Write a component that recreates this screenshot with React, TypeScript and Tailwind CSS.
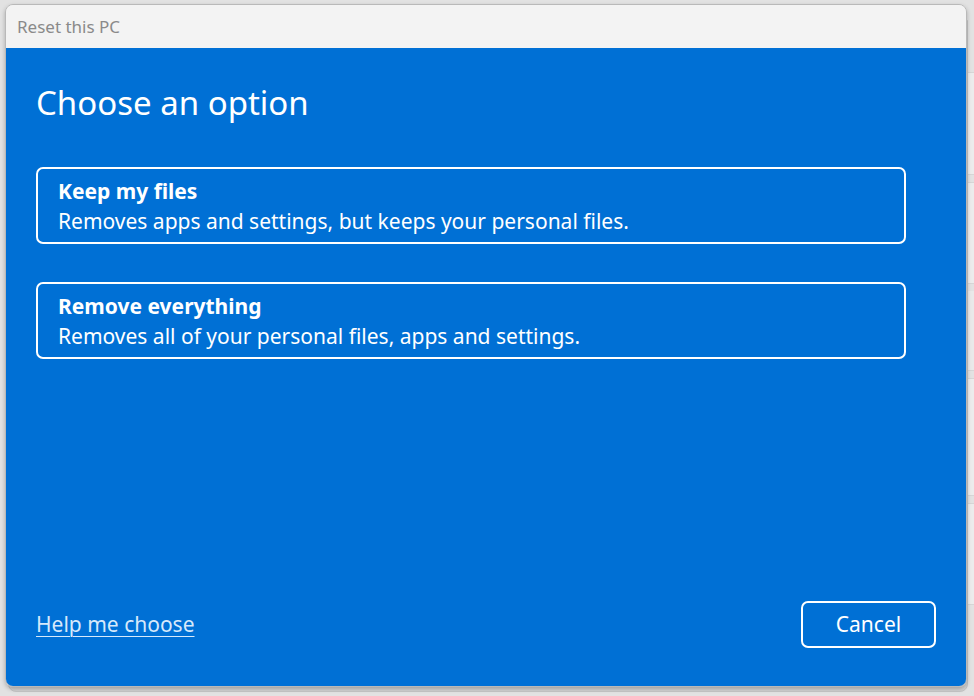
import React from 'react';

const font = { fontFamily: '"Noto Sans", "Open Sans", sans-serif' };

interface OptionProps {
  title: string;
  description: string;
}

function OptionCard({ title, description }: OptionProps) {
  return (
    <button className="w-[870px] h-[77px] rounded-[7px] border-2 border-white px-[20px] text-left text-white flex flex-col justify-center">
      <span className="text-[21px] font-bold leading-[30px]">{title}</span>
      <span className="text-[21px] leading-[30px]">{description}</span>
    </button>
  );
}

// faint settings page visible behind the dialog
function SettingsBackdrop() {
  return (
    <div className="flex flex-col pl-[900px] pt-[72px] gap-[7px]">
      <div className="h-[103px] bg-[#ececec] border-y border-[#d6d6d6]" />
      <div className="h-[102px] bg-[#ececec] border-y border-[#d6d6d6]" />
      <div className="h-[80px] bg-[#e9e9e9] border-b border-[#d6d6d6]" />
      <div className="h-[118px] bg-[#ececec] border-y border-[#d6d6d6]" />
      <div className="h-[102px] bg-[#ececec] border-y border-[#d6d6d6]" />
    </div>
  );
}

export default function App() {
  return (
    <div className="relative w-[974px] h-[696px] overflow-hidden bg-[#e2e2e2]" style={font}>
      <SettingsBackdrop />

      {/* second window edge peeking out below */}
      <div className="absolute left-[8px] top-[20px] w-[960px] h-[672px] rounded-b-[8px] border border-[#c6c6c6] bg-[#d4d4d4]" />

      <div className="absolute left-[5px] top-[4px] w-[962px] h-[683px] rounded-[8px] border border-[#b9b9b9] overflow-hidden flex flex-col shadow-[0_2px_4px_rgba(0,0,0,0.25)]">
        <div className="h-[43px] bg-[#f3f3f3] flex items-center px-[11px] text-[17px] text-[#8a8a8a]">
          Reset this PC
        </div>

        <div className="flex-1 bg-[#0070d5] flex flex-col px-[30px] pt-[33px] pb-[38px] text-white">
          <h1 className="text-[33px] leading-[44px] font-normal">Choose an option</h1>

          <div className="flex flex-col gap-[38px] mt-[42px]">
            <OptionCard
              title="Keep my files"
              description="Removes apps and settings, but keeps your personal files."
            />
            <OptionCard
              title="Remove everything"
              description="Removes all of your personal files, apps and settings."
            />
          </div>

          <div className="mt-auto flex items-center justify-between">
            <a className="text-[21px] text-[#d6e9fb] underline underline-offset-[4px] decoration-1">
              Help me choose
            </a>
            <button className="w-[135px] h-[47px] rounded-[7px] border-2 border-white text-[21px] text-white">
              Cancel
            </button>
          </div>
        </div>
      </div>
    </div>
  );
}
